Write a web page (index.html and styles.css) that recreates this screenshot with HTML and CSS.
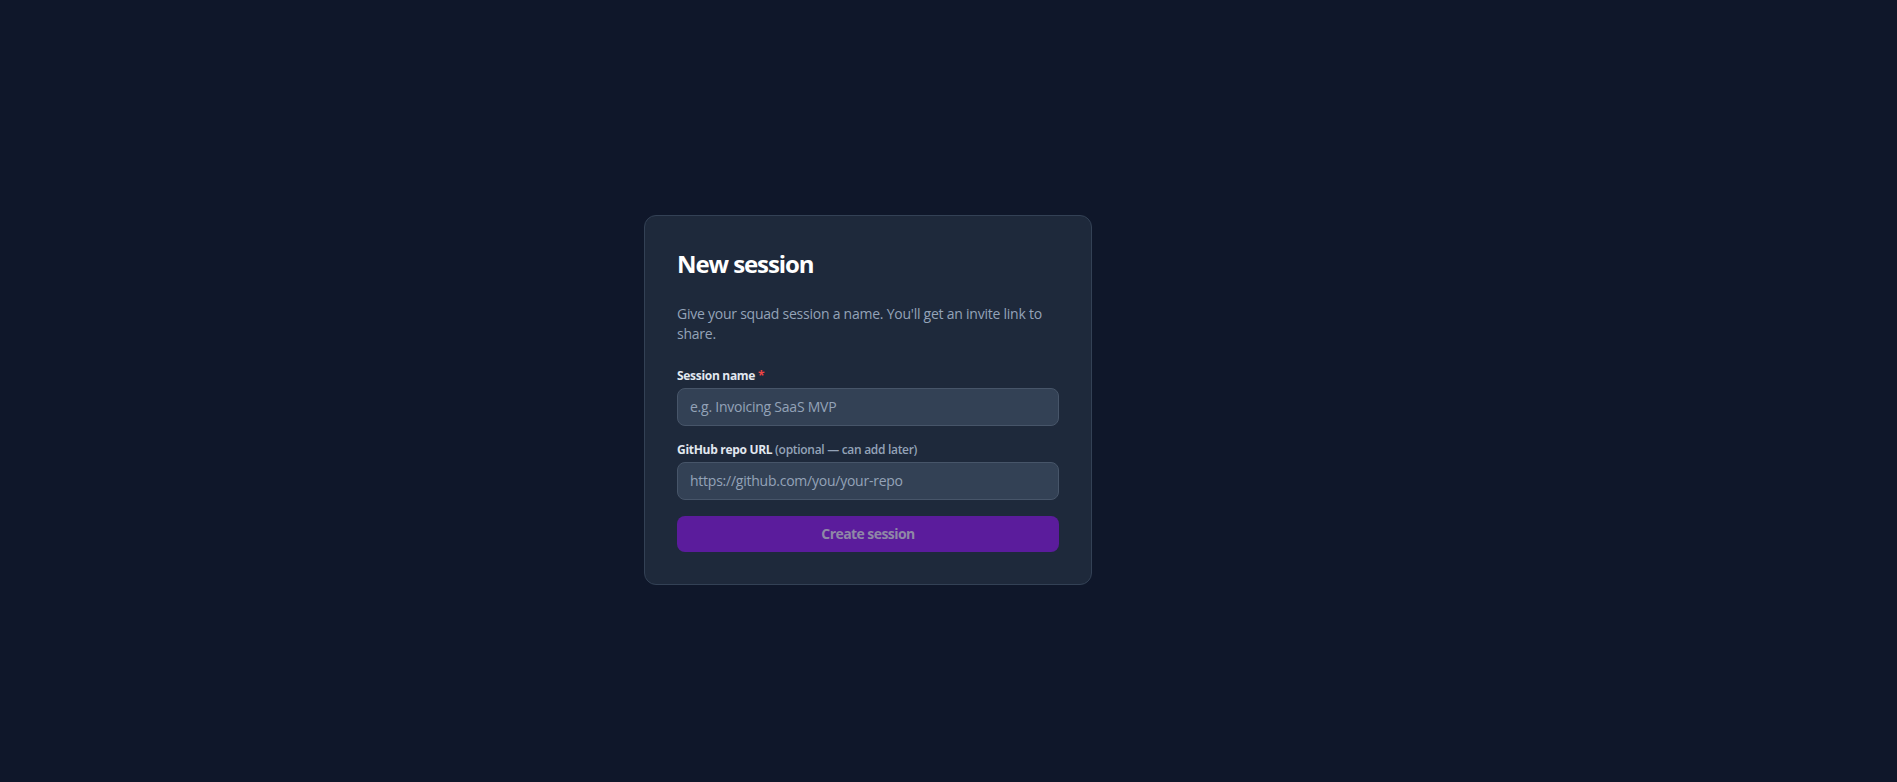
FILE: index.html
```html
<!DOCTYPE html>
<html lang="en">
<head>
<meta charset="utf-8">
<title>New session</title>
<link rel="stylesheet" href="styles.css">
</head>
<body>
<div class="page">
  <form class="card">
    <h1 class="title">New session</h1>
    <p class="subtitle">Give your squad session a name. You'll get an invite link to share.</p>
    <div class="field">
      <label class="label">Session name <span class="req">*</span></label>
      <input class="input" type="text" placeholder="e.g. Invoicing SaaS MVP">
    </div>
    <div class="field">
      <label class="label">GitHub repo URL <span class="hint">(optional — can add later)</span></label>
      <input class="input" type="text" placeholder="https://github.com/you/your-repo">
    </div>
    <button class="btn" type="button">Create session</button>
  </form>
</div>
</body>
</html>
```
FILE: styles.css
```css
* { box-sizing: border-box; }
html, body { margin: 0; height: 100%; }
body {
  background: #0f172a;
  font-family: "Open Sans", "Noto Sans", sans-serif;
  letter-spacing: -0.015em;
  color: #f1f5f9;
}
.page {
  min-height: 100vh;
  display: flex;
  align-items: center;
  justify-content: center;
  padding: 17px 161px 0 0;
}
.card {
  width: 448px;
  background: #1e293b;
  border: 1px solid #334155;
  border-radius: 12px;
  padding: 32px;
  display: flex;
  flex-direction: column;
}
.title {
  margin: 0;
  font-size: 24px;
  line-height: 32px;
  font-weight: 700;
  letter-spacing: -0.045em;
  color: #ffffff;
}
.subtitle {
  margin: 24px 0 0;
  font-size: 14px;
  line-height: 20px;
  color: #94a3b8;
}
.field {
  display: flex;
  flex-direction: column;
  gap: 4px;
  margin-top: 24px;
}
.field + .field { margin-top: 16px; }
.label {
  font-size: 12px;
  line-height: 16px;
  font-weight: 700;
  letter-spacing: -0.025em;
  color: #e2e8f0;
}
.req { color: #ef4444; }
.hint { font-weight: 600; color: #94a3b8; }
.input {
  height: 38px;
  width: 100%;
  background: #334155;
  border: 1px solid #475569;
  border-radius: 8px;
  padding: 8px 12px;
  font-family: inherit;
  letter-spacing: inherit;
  font-size: 14px;
  line-height: 20px;
  color: #f1f5f9;
  outline: none;
}
.input::placeholder { color: #94a3b8; }
.btn {
  margin-top: 16px;
  height: 36px;
  border: none;
  border-radius: 8px;
  background: #5b1c9c;
  color: #8f88a6;
  font-family: inherit;
  letter-spacing: -0.04em;
  font-size: 14px;
  font-weight: 700;
  line-height: 20px;
}
```
